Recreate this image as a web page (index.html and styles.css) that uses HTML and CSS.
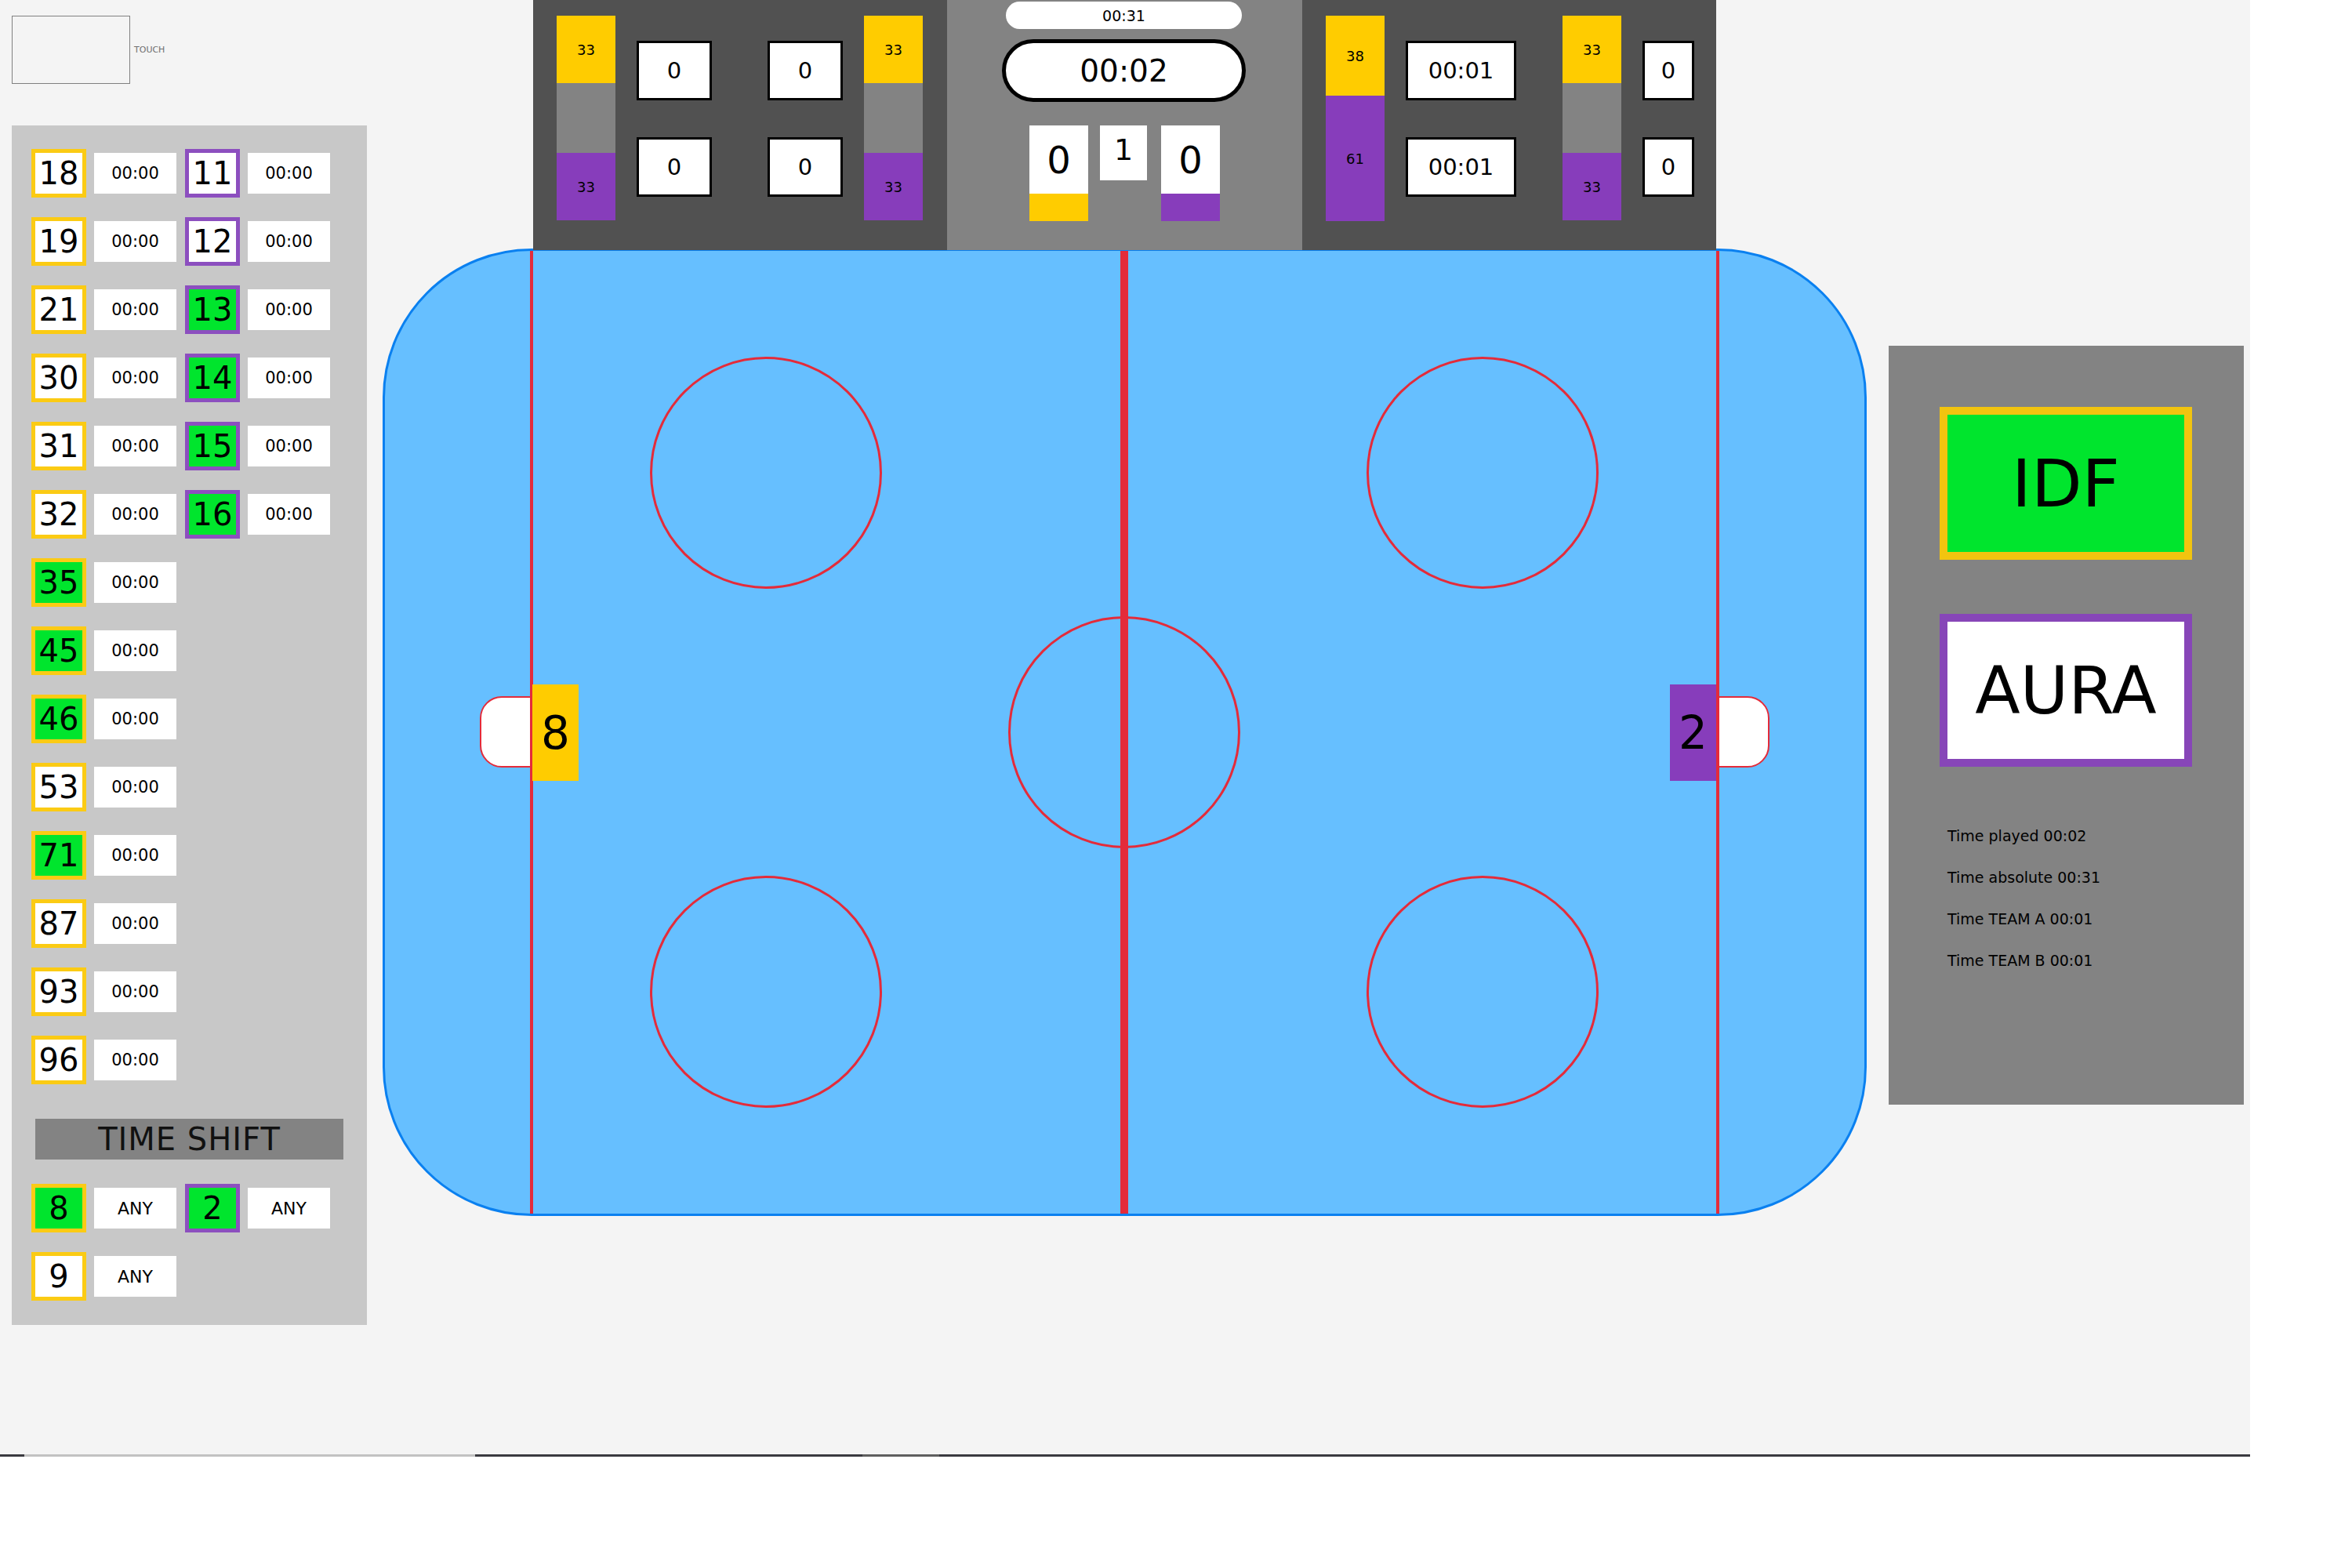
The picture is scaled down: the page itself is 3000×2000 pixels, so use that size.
FILE: index.html
```html
<!DOCTYPE html>
<html>
<head>
<meta charset="utf-8">
<link rel="stylesheet" href="styles.css">
</head>
<body>
<div class="app">
  <div class="col-left">
    <div class="touch-row">
      <div class="touch-box"></div>
      <span class="touch-label">TOUCH</span>
    </div>
    <div class="roster">
      <div class="row"><div class="num yel">18</div><div class="time">00:00</div><div class="num pur">11</div><div class="time">00:00</div></div>
      <div class="row"><div class="num yel">19</div><div class="time">00:00</div><div class="num pur">12</div><div class="time">00:00</div></div>
      <div class="row"><div class="num yel">21</div><div class="time">00:00</div><div class="num pur on">13</div><div class="time">00:00</div></div>
      <div class="row"><div class="num yel">30</div><div class="time">00:00</div><div class="num pur on">14</div><div class="time">00:00</div></div>
      <div class="row"><div class="num yel">31</div><div class="time">00:00</div><div class="num pur on">15</div><div class="time">00:00</div></div>
      <div class="row"><div class="num yel">32</div><div class="time">00:00</div><div class="num pur on">16</div><div class="time">00:00</div></div>
      <div class="row"><div class="num yel on">35</div><div class="time">00:00</div></div>
      <div class="row"><div class="num yel on">45</div><div class="time">00:00</div></div>
      <div class="row"><div class="num yel on">46</div><div class="time">00:00</div></div>
      <div class="row"><div class="num yel">53</div><div class="time">00:00</div></div>
      <div class="row"><div class="num yel on">71</div><div class="time">00:00</div></div>
      <div class="row"><div class="num yel">87</div><div class="time">00:00</div></div>
      <div class="row"><div class="num yel">93</div><div class="time">00:00</div></div>
      <div class="row"><div class="num yel">96</div><div class="time">00:00</div></div>
      <div class="shift-title">TIME SHIFT</div>
      <div class="row"><div class="num yel on">8</div><div class="time any">ANY</div><div class="num pur on">2</div><div class="time any">ANY</div></div>
      <div class="row"><div class="num yel">9</div><div class="time any">ANY</div></div>
    </div>
  </div>

  <div class="col-center">
    <div class="scoreboard">
      <div class="sb-side">
        <div class="bar">
          <div class="seg yelbg h86">33</div>
          <div class="seg graybg h89"></div>
          <div class="seg purbg h86">33</div>
        </div>
        <div class="boxcol ml27">
          <div class="sbox w96">0</div>
          <div class="sbox w96">0</div>
        </div>
        <div class="boxcol ml71">
          <div class="sbox w96">0</div>
          <div class="sbox w96">0</div>
        </div>
        <div class="bar ml27">
          <div class="seg yelbg h86">33</div>
          <div class="seg graybg h89"></div>
          <div class="seg purbg h86">33</div>
        </div>
      </div>
      <div class="sb-mid">
        <div class="pill-small">00:31</div>
        <div class="pill-big">00:02</div>
        <div class="scores">
          <div class="score">
            <div class="score-val">0</div>
            <div class="score-team yelbg"></div>
          </div>
          <div class="period">1</div>
          <div class="score score-right">
            <div class="score-val">0</div>
            <div class="score-team purbg"></div>
          </div>
        </div>
      </div>
      <div class="sb-side">
        <div class="bar">
          <div class="seg yelbg h102">38</div>
          <div class="seg purbg h160">61</div>
        </div>
        <div class="boxcol ml27">
          <div class="sbox w141">00:01</div>
          <div class="sbox w141">00:01</div>
        </div>
        <div class="bar ml59">
          <div class="seg yelbg h86">33</div>
          <div class="seg graybg h89"></div>
          <div class="seg purbg h86">33</div>
        </div>
        <div class="boxcol ml27">
          <div class="sbox w66">0</div>
          <div class="sbox w66">0</div>
        </div>
      </div>
    </div>

    <div class="rink">
      <div class="crease crease-left"></div>
      <div class="crease crease-right"></div>
      <div class="line goal-left"></div>
      <div class="line center-line"></div>
      <div class="line goal-right"></div>
      <div class="circle c-tl"></div>
      <div class="circle c-tr"></div>
      <div class="circle c-mid"></div>
      <div class="circle c-bl"></div>
      <div class="circle c-br"></div>
      <div class="goalie goalie-left yelbg">8</div>
      <div class="goalie goalie-right purbg">2</div>
    </div>
  </div>

  <div class="col-right">
    <div class="info">
      <div class="team team-a">IDF</div>
      <div class="team team-b">AURA</div>
      <div class="stats">
        <div class="stat">Time played 00:02</div>
        <div class="stat">Time absolute 00:31</div>
        <div class="stat">Time TEAM A 00:01</div>
        <div class="stat">Time TEAM B 00:01</div>
      </div>
    </div>
  </div>
</div>
<div class="bottombar">
  <div class="bb dark w31"></div>
  <div class="bb light w575"></div>
  <div class="bb dark w494"></div>
  <div class="bb mid w98"></div>
  <div class="bb dark grow"></div>
</div>
</body>
</html>
```

FILE: styles.css
```css
* { box-sizing: border-box; }
html, body { margin: 0; padding: 0; background: #ffffff; }
body { font-family: "DejaVu Sans", "Liberation Sans", sans-serif; color: #000; }

.app {
  width: 2870px;
  height: 1855px;
  background: #f4f4f4;
  display: flex;
  align-items: flex-start;
  padding-left: 15px;
}

/* ---------- left column ---------- */
.col-left { width: 453px; }
.touch-row { display: flex; align-items: center; margin-top: 20px; }
.touch-box { width: 151px; height: 87px; border: 1px solid #808080; }
.touch-label { margin-left: 5px; font-size: 11px; color: #707070; }

.roster {
  margin-top: 53px;
  height: 1530px;
  background: #c8c8c8;
  padding: 30px 0 31px 25px;
  display: flex;
  flex-direction: column;
  gap: 25px;
}
.row { display: flex; align-items: center; height: 62px; }
.num {
  width: 70px; height: 62px;
  border: 5px solid #fbcb14;
  background: #fff;
  display: flex; align-items: center; justify-content: center;
  font-size: 40px; line-height: 1;
}
.num.pur { border-color: #8c4fbf; margin-left: 11px; }
.num.on { background: #00e52d; }
.time {
  width: 105px; height: 52px;
  margin-left: 10px;
  background: #fff;
  display: flex; align-items: center; justify-content: center;
  font-size: 21px;
}
.time.any { font-size: 22px; }
.shift-title {
  margin: 19px 0 6px 5px;
  width: 393px; height: 52px;
  background: #838383;
  color: #111;
  display: flex; align-items: center; justify-content: center;
  font-size: 40px; letter-spacing: 1px;
}

/* ---------- center column ---------- */
.col-center { width: 1893px; margin-left: 20px; }
.scoreboard {
  position: relative; z-index: 2;
  display: flex;
  margin-left: 192px;
  width: 1509px;
  height: 319px;
}
.sb-side { width: 528px; background: #515151; display: flex; align-items: flex-start; padding: 20px 0 0 30px; }
.sb-mid { width: 453px; background: #838383; display: flex; flex-direction: column; }

.bar { width: 75px; display: flex; flex-direction: column; }
.seg { display: flex; align-items: center; justify-content: center; font-size: 18px; }
.h86 { height: 86px; }
.h89 { height: 89px; }
.h102 { height: 102px; }
.h160 { height: 160px; }
.yelbg { background: #ffcc00; }
.purbg { background: #873dbb; }
.graybg { background: #838383; }
.ml27 { margin-left: 27px; }
.ml59 { margin-left: 59px; }
.ml71 { margin-left: 71px; }

.boxcol { display: flex; flex-direction: column; gap: 47px; padding-top: 32px; }
.sbox {
  height: 76px;
  background: #fff;
  border: 3px solid #000;
  display: flex; align-items: center; justify-content: center;
  font-size: 29px;
}
.w96 { width: 96px; }
.w141 { width: 141px; }
.w66 { width: 66px; }

.pill-small {
  margin: 2px 0 0 75px;
  width: 301px; height: 35px;
  border-radius: 18px;
  background: #fff;
  display: flex; align-items: center; justify-content: center;
  font-size: 19px;
}
.pill-big {
  margin: 13px 0 0 70px;
  width: 311px; height: 80px;
  border-radius: 40px;
  border: 5px solid #000;
  background: #fff;
  display: flex; align-items: center; justify-content: center;
  font-size: 39px;
}
.scores { display: flex; align-items: flex-start; margin: 30px 0 0 105px; }
.score { width: 75px; display: flex; flex-direction: column; }
.score-val {
  height: 87px; background: #fff;
  display: flex; align-items: center; justify-content: center;
  font-size: 48px;
}
.score-team { height: 35px; }
.period {
  width: 60px; height: 70px; margin-left: 15px;
  background: #fff;
  display: flex; align-items: center; justify-content: center;
  font-size: 38px; padding-bottom: 8px;
}
.score-right { margin-left: 18px; }

/* ---------- rink ---------- */
.rink {
  position: relative;
  margin-top: -2px;
  width: 1893px; height: 1234px;
  background: #66bfff;
  border: 3px solid #0a80f0;
  border-radius: 190px;
}
.line { position: absolute; top: 0; bottom: 0; background: #e42b3a; }
.goal-left { left: 185px; width: 4px; }
.center-line { left: 938px; width: 10px; }
.goal-right { left: 1698px; width: 4px; }
.circle {
  position: absolute;
  width: 296px; height: 296px;
  border: 3px solid #e42b3a;
  border-radius: 50%;
}
.c-tl { left: 338px; top: 135px; }
.c-tr { left: 1252px; top: 135px; }
.c-mid { left: 795px; top: 466px; }
.c-bl { left: 338px; top: 797px; }
.c-br { left: 1252px; top: 797px; }
.crease {
  position: absolute; top: 568px;
  width: 66px; height: 91px;
  background: #fff;
  border: 2px solid #e42b3a;
}
.crease-left { left: 121px; border-radius: 28px 0 0 28px; }
.crease-right { left: 1700px; border-radius: 0 28px 28px 0; }
.goalie {
  position: absolute; top: 553px;
  width: 59px; height: 123px;
  display: flex; align-items: center; justify-content: center;
  font-size: 58px;
}
.goalie-left { left: 188px; }
.goalie-right { left: 1639px; }

/* ---------- right column ---------- */
.col-right { width: 453px; margin-left: 28px; }
.info {
  margin-top: 441px;
  height: 968px;
  background: #838383;
  padding: 78px 0 0 65px;
}
.team {
  width: 322px; height: 195px;
  border: 10px solid #f2c40f;
  background: #00e52d;
  display: flex; align-items: center; justify-content: center;
  font-size: 84px;
}
.team-b { margin-top: 69px; border-color: #8746b8; background: #fff; }
.stats { margin: 62px 0 0 10px; }
.stat { height: 53px; line-height: 53px; font-size: 19px; color: #000; }

/* ---------- bottom bar ---------- */
.bottombar { display: flex; width: 2870px; height: 3px; }
.bb { height: 3px; }
.dark { background: #3a3a40; }
.light { background: #c2c2c2; }
.mid { background: #5f5f5f; }
.w31 { width: 31px; }
.w575 { width: 575px; }
.w494 { width: 494px; }
.w98 { width: 98px; }
.grow { flex: 1; }
```
